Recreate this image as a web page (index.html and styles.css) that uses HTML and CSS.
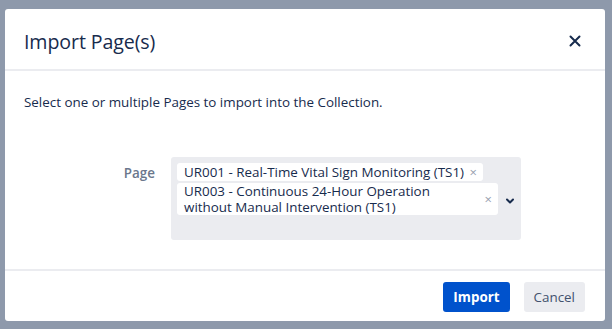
FILE: index.html
```html
<!DOCTYPE html>
<html lang="en">
<head>
    <meta charset="UTF-8">
    <title>Import Page(s)</title>
    <link rel="stylesheet" href="styles.css">
</head>
<body>
    <div class="backdrop">
        <div class="dialog">
            <div class="dialog-header">
                <h2 class="dialog-title">Import Page(s)</h2>
                <button class="close-button" aria-label="Close">
                    <svg width="12" height="12" viewBox="0 0 12 12"><path d="M1.5 1.5 L10.5 10.5 M10.5 1.5 L1.5 10.5" stroke="#172b4d" stroke-width="2" stroke-linecap="round"/></svg>
                </button>
            </div>
            <div class="dialog-body">
                <p class="intro">Select one or multiple Pages to import into the Collection.</p>
                <div class="field">
                    <label class="field-label">Page</label>
                    <div class="multi-select">
                        <div class="tags">
                            <span class="tag">UR001 - Real-Time Vital Sign Monitoring (TS1) <span class="tag-remove">×</span></span>
                            <span class="tag tag-wide"><span class="tag-text">UR003 - Continuous 24-Hour Operation<br>without Manual Intervention (TS1)</span><span class="tag-remove">×</span></span>
                        </div>
                        <span class="chevron">
                            <svg width="10" height="8" viewBox="0 0 10 8"><path d="M2 2.5 L5 5.5 L8 2.5" fill="none" stroke="#172b4d" stroke-width="2" stroke-linecap="round" stroke-linejoin="round"/></svg>
                        </span>
                    </div>
                </div>
            </div>
            <div class="dialog-footer">
                <button class="btn btn-primary">Import</button>
                <button class="btn btn-subtle">Cancel</button>
            </div>
        </div>
    </div>
</body>
</html>
```

FILE: styles.css
```css
:root {
    --text-color: #172b4d;
    --muted-color: #6b778c;
    --primary-color: #0052cc;
    --neutral-bg: #ebecf0;
}

body {
    margin: 0;
    font-family: "Open Sans", "Noto Sans", sans-serif;
    color: var(--text-color);
    background-color: #8e99ab;
}

.backdrop {
    height: 329px;
    padding: 9px 7px 8px 5px;
    box-sizing: border-box;
}

.dialog {
    height: 100%;
    background: #fff;
    border-radius: 3px;
    display: flex;
    flex-direction: column;
}

.dialog-header {
    display: flex;
    align-items: center;
    justify-content: space-between;
    height: 60px;
    padding: 0 24px 0 19px;
    border-bottom: 2px solid var(--neutral-bg);
}

.dialog-title {
    margin: 4px 0 0;
    font-size: 19.6px;
    font-weight: 500;
    letter-spacing: -0.1px;
}

.close-button {
    border: none;
    background: none;
    padding: 0;
    width: 12px;
    height: 12px;
    display: flex;
    align-items: center;
    justify-content: center;
    margin-top: 4px;
}

.dialog-body {
    flex: 1;
    padding: 0 19px;
}

.intro {
    margin: 22px 0 0;
    font-size: 13.4px;
}

.field {
    display: flex;
    align-items: flex-start;
    margin-top: 46px;
}

.field-label {
    width: 131px;
    text-align: right;
    padding-right: 16px;
    padding-top: 7px;
    font-size: 13.4px;
    font-weight: 600;
    color: var(--muted-color);
}

.multi-select {
    width: 350px;
    height: 83px;
    box-sizing: border-box;
    background: var(--neutral-bg);
    border-radius: 3px;
    padding: 6px;
    display: flex;
    align-items: flex-start;
}

.tags {
    display: flex;
    flex-direction: column;
    align-items: flex-start;
    gap: 2px;
}

.tag {
    background: #fff;
    border-radius: 3px;
    padding: 0 6px 0 7px;
    font-size: 13.4px;
    line-height: 18px;
}

.tag-wide {
    display: flex;
    align-items: center;
    width: 321px;
    box-sizing: border-box;
    line-height: 16px;
}

.tag-text {
    flex: 1;
}

.tag-remove {
    color: #97a0af;
    font-size: 13px;
    margin-left: 2px;
}

.chevron {
    margin: 34px 0 0 7px;
    display: flex;
}

.dialog-footer {
    display: flex;
    justify-content: flex-end;
    gap: 14px;
    padding: 11px 20px 9px;
    border-top: 2px solid var(--neutral-bg);
}

.btn {
    height: 30px;
    border: none;
    border-radius: 3px;
    font-family: inherit;
    font-size: 13.4px;
    padding: 0 10px;
}

.btn-primary {
    background: var(--primary-color);
    color: #fff;
    font-weight: 700;
}

.btn-subtle {
    background: var(--neutral-bg);
    color: #42526e;
}
```
